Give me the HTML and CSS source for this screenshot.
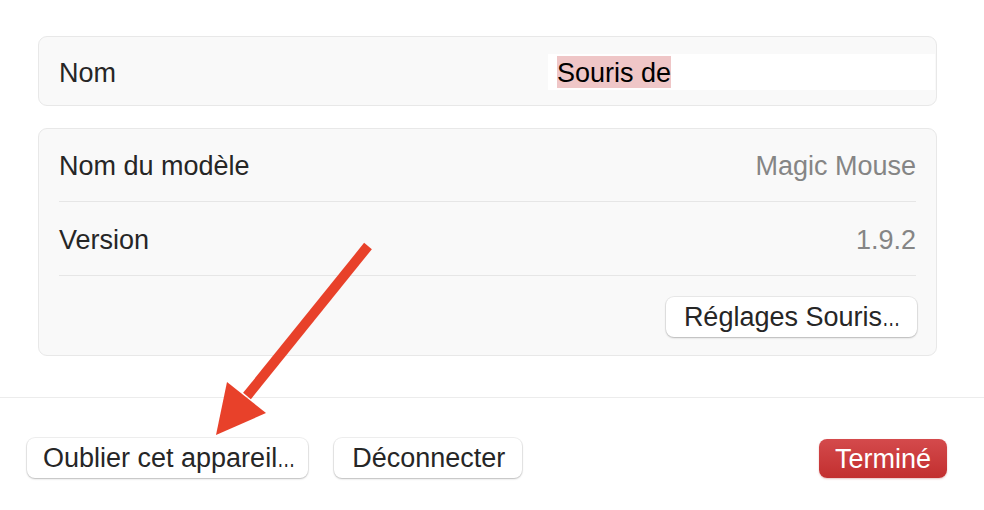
FILE: index.html
```html
<!DOCTYPE html>
<html lang="fr">
<head>
<meta charset="utf-8">
<link rel="stylesheet" href="styles.css">
</head>
<body>
<div class="window">
  <div class="content">
    <div class="card card-name">
      <span class="label">Nom</span>
      <div class="field"><span class="sel">Souris de</span></div>
    </div>
    <div class="card card-info">
      <div class="row"><span class="label">Nom du modèle</span><span class="value">Magic Mouse</span></div>
      <div class="row row-2"><span class="label">Version</span><span class="value">1.9.2</span></div>
      <div class="row-btn"><button class="btn">Réglages Souris<span class="ell">…</span></button></div>
    </div>
  </div>
  <div class="footer">
    <div class="left-btns">
      <button class="btn btn-forget">Oublier cet appareil<span class="ell">…</span></button>
      <button class="btn">Déconnecter</button>
    </div>
    <button class="btn btn-primary">Terminé</button>
  </div>
  <svg class="arrow" width="984" height="510" viewBox="0 0 984 510">
    <line x1="368" y1="246" x2="247" y2="396" stroke="#e8412a" stroke-width="10"/>
    <polygon points="227,382 266,413 216,435" fill="#e8412a"/>
  </svg>
</div>
</body>
</html>
```
FILE: styles.css
```css
html, body {
  margin: 0;
  padding: 0;
  background: #ffffff;
}
body {
  font-family: "Liberation Sans", Arial, sans-serif;
  font-size: 27px;
  color: #262626;
  width: 984px;
  height: 510px;
  overflow: hidden;
}
.window {
  position: relative;
  width: 984px;
  height: 510px;
}
.content {
  padding: 36px 47px 0 38px;
  display: flex;
  flex-direction: column;
  gap: 22px;
  height: 398px;
  box-sizing: border-box;
  border-bottom: 1px solid #ececec;
}
.card {
  background: #f9f9f9;
  border: 1px solid #e8e8e8;
  border-radius: 9px;
}
.card-name {
  height: 70px;
  box-sizing: border-box;
  display: flex;
  align-items: center;
  padding-left: 20px;
}
.card-name .label {
  flex: 1;
  padding-top: 4px;
}
.field {
  width: 387px;
  box-sizing: border-box;
  height: 36px;
  background: #ffffff;
  display: flex;
  align-items: center;
  padding-left: 9px;
  margin-right: 1px;
  margin-top: 2px;
}
.sel {
  background: #efc6c7;
  color: #000;
  line-height: 32px;
  height: 32px;
  padding-top: 1px;
  box-sizing: border-box;
}
.card-info {
  padding: 0 20px;
  height: 228px;
  box-sizing: border-box;
}
.row {
  height: 73px;
  box-sizing: border-box;
  padding-top: 3px;
  display: flex;
  align-items: center;
  justify-content: space-between;
  border-bottom: 1px solid #e6e6e6;
}
.row-2 {
  height: 74px;
}
.value {
  color: #858585;
}
.row-btn {
  display: flex;
  justify-content: flex-end;
  padding-top: 21px;
}
.btn {
  font-family: inherit;
  font-size: 27px;
  color: #262626;
  background: #ffffff;
  border: none;
  border-radius: 8px;
  height: 40px;
  padding: 0 17px 0 18px;
  box-shadow: 0 0 0 1px rgba(0,0,0,0.06), 0 1px 2px rgba(0,0,0,0.22);
  line-height: 40px;
  white-space: nowrap;
}
.ell {
  display: inline-block;
  transform: scaleX(0.68);
  transform-origin: left center;
  margin-right: -9px;
}
.btn-forget {
  padding: 0 13px 0 16px;
}
.row-btn .btn {
  margin-right: -1px;
}
.footer {
  display: flex;
  justify-content: space-between;
  align-items: center;
  padding: 40px 37px 0 27px;
}
.left-btns {
  display: flex;
  gap: 26px;
}
.btn-primary {
  color: #ffffff;
  background: linear-gradient(#d44a4c, #c22f2f);
  padding: 0 16px;
  height: 39px;
  box-shadow: 0 1px 2px rgba(160,0,0,0.25);
}
.arrow {
  position: absolute;
  left: 0;
  top: 0;
  pointer-events: none;
}
```
